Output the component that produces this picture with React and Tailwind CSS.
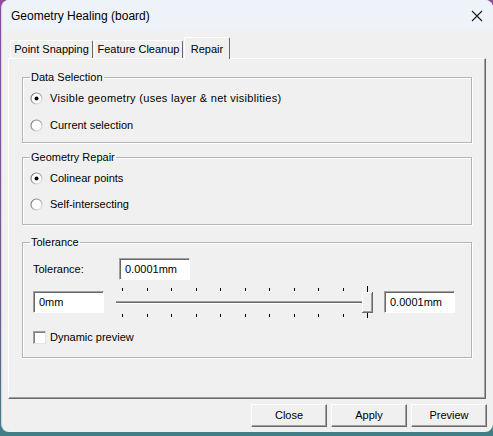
import { useState } from 'react';

const font = { fontFamily: '"Liberation Sans", Arial, sans-serif' };

const Radio = ({ checked }) => (
  <svg width="13" height="13" viewBox="0 0 13 13" className="shrink-0">
    <defs>
      <linearGradient id="rg" x1="0" y1="0" x2="1" y2="1">
        <stop offset="0" stopColor="#6e6e6e" />
        <stop offset="0.55" stopColor="#a8a8a8" />
        <stop offset="1" stopColor="#f4f4f4" />
      </linearGradient>
    </defs>
    <circle cx="6.5" cy="6.5" r="5.5" fill="#ffffff" stroke="url(#rg)" strokeWidth="1.2" />
    {checked && <circle cx="6.5" cy="6.5" r="2" fill="#000000" />}
  </svg>
);

const RadioRow = ({ checked, label, className = '', wide = false }) => (
  <div className={`flex items-center h-[14px] pl-[7px] ${className}`}>
    <Radio checked={checked} />
    <span className={`ml-[7px] text-[11px] leading-[14px] whitespace-nowrap ${wide ? 'tracking-[0.3px]' : ''}`}>
      {label}
    </span>
  </div>
);

const Field = ({ value, width = 'w-[71px]' }) => (
  <div
    className={`${width} h-[22px] bg-white border border-t-[#a0a0a0] border-l-[#a0a0a0] border-r-white border-b-white shadow-[inset_1px_1px_0_#696969] flex items-center pl-[5px] text-[11px]`}
  >
    {value}
  </div>
);

const Group = ({ title, children, className = '' }) => (
  <fieldset
    className={`border border-[#b4b4b4] shadow-[inset_1px_1px_0_#ffffff,1px_1px_0_#ffffff] ${className}`}
  >
    <legend className="ml-[7px] px-[1px] text-[11px] leading-[14px]">{title}</legend>
    {children}
  </fieldset>
);

const Slider = () => {
  const ticks = Array.from({ length: 11 }, (_, i) => 8 + i * 24.5);
  return (
    <svg width="260" height="32" viewBox="0 0 260 32" className="ml-[10px] shrink-0">
      <rect x="2" y="15" width="247" height="1" fill="#a0a0a0" />
      <rect x="2" y="16" width="247" height="1" fill="#696969" />
      <rect x="2" y="17" width="247" height="1" fill="#ffffff" />
      {ticks.map((x, i) =>
        i === 10 ? (
          <g key={i}>
            <rect x={Math.round(x)} y="0" width="1" height="6" fill="#000" />
            <rect x={Math.round(x)} y="27" width="1" height="5" fill="#000" />
          </g>
        ) : (
          <g key={i}>
            <rect x={Math.round(x)} y="2" width="1" height="3" fill="#000" />
            <rect x={Math.round(x)} y="28" width="1" height="3" fill="#000" />
          </g>
        )
      )}
      <rect x="248" y="6" width="11" height="21" fill="#696969" />
      <rect x="248" y="6" width="10" height="20" fill="#ffffff" />
      <rect x="249" y="7" width="9" height="19" fill="#a0a0a0" />
      <rect x="249" y="7" width="8" height="18" fill="#f0f0f0" />
    </svg>
  );
};

const Button = ({ children }) => (
  <button
    className="w-[76px] h-[23px] bg-[#f0f0f0] border border-t-white border-l-white border-r-[#696969] border-b-[#696969] shadow-[inset_-1px_-1px_0_#a0a0a0] text-[11px] text-black"
  >
    {children}
  </button>
);

export default function App() {
  const [tab] = useState('Repair');
  const tabs = [
    { name: 'Point Snapping', w: 'w-[83px]' },
    { name: 'Feature Cleanup', w: 'w-[89px]' },
    { name: 'Repair', w: 'w-[46px]' },
  ];

  return (
    <div className="w-[493px] h-[436px] bg-[linear-gradient(180deg,#8b4f9c_0%,#6f5a93_70%,#3f7f86_100%)] overflow-hidden" style={font}>
      <div className="ml-[1px] w-[492px] h-[432px] rounded-[8px] overflow-hidden bg-[#f0f0f0] border-l border-[#d4d4d4] text-black">
        <div className="h-[31px] bg-[#eef3f9] flex items-center justify-between pl-[9px] pr-[10px]">
          <span className="text-[12px]">Geometry Healing (board)</span>
          <svg width="12" height="12" viewBox="0 0 12 12">
            <path d="M1 1 L11 11 M11 1 L1 11" stroke="#1a1a1a" strokeWidth="1.1" />
          </svg>
        </div>

        <div className="pl-[6px]">
          <div className="flex items-end h-[21px] mt-[6px] pl-[2px]">
            {tabs.map((t) =>
              t.name === tab ? (
                <div
                  key={t.name}
                  className={`${t.w} h-[22px] -mb-px relative z-10 bg-[#f0f0f0] border-t border-l border-r border-t-white border-l-white border-r-[#696969] rounded-t-[2px] flex items-start justify-center pt-[3px] text-[11px] whitespace-nowrap`}
                >
                  {t.name}
                </div>
              ) : (
                <div
                  key={t.name}
                  className={`${t.w} h-[18px] bg-[#f0f0f0] border-t border-l border-r border-t-white border-l-white border-r-[#696969] rounded-t-[2px] flex items-center justify-center text-[11px] whitespace-nowrap mr-px`}
                >
                  {t.name}
                </div>
              )
            )}
          </div>

          <div className="w-[478px] h-[341px] border border-t-white border-l-white border-r-[#696969] border-b-[#696969] shadow-[inset_-1px_-1px_0_#a0a0a0] px-[13px] pt-[11px]">
            <Group title="Data Selection">
              <div className="pt-[7px] pb-[10px]">
                <RadioRow checked wide label="Visible geometry (uses layer & net visiblities)" />
                <RadioRow label="Current selection" className="mt-[13px]" />
              </div>
            </Group>

            <Group title="Geometry Repair" className="mt-[7px]">
              <div className="pt-[7px] pb-[13px]">
                <RadioRow checked label="Colinear points" />
                <RadioRow label="Self-intersecting" className="mt-[12px]" />
              </div>
            </Group>

            <Group title="Tolerance" className="mt-[10px]">
              <div className="pt-[9px] pb-[13px] pl-[10px]">
                <div className="flex items-center">
                  <span className="w-[86px] text-[11px]">Tolerance:</span>
                  <Field value="0.0001mm" />
                </div>
                <div className="flex items-center mt-[6px]">
                  <Field value="0mm" />
                  <Slider />
                  <div className="ml-[10px]">
                    <Field value="0.0001mm" />
                  </div>
                </div>
                <div className="flex items-center mt-[12px] h-[14px]">
                  <div className="w-[13px] h-[13px] bg-white border border-t-[#a0a0a0] border-l-[#a0a0a0] border-r-[#e4e4e4] border-b-[#e4e4e4] shadow-[inset_1px_1px_0_#808080]" />
                  <span className="ml-[4px] text-[11px]">Dynamic preview</span>
                </div>
              </div>
            </Group>
          </div>

          <div className="flex justify-end gap-[4px] w-[479px] mt-[5px]">
            <Button>Close</Button>
            <Button>Apply</Button>
            <Button>Preview</Button>
          </div>
        </div>
      </div>
    </div>
  );
}
